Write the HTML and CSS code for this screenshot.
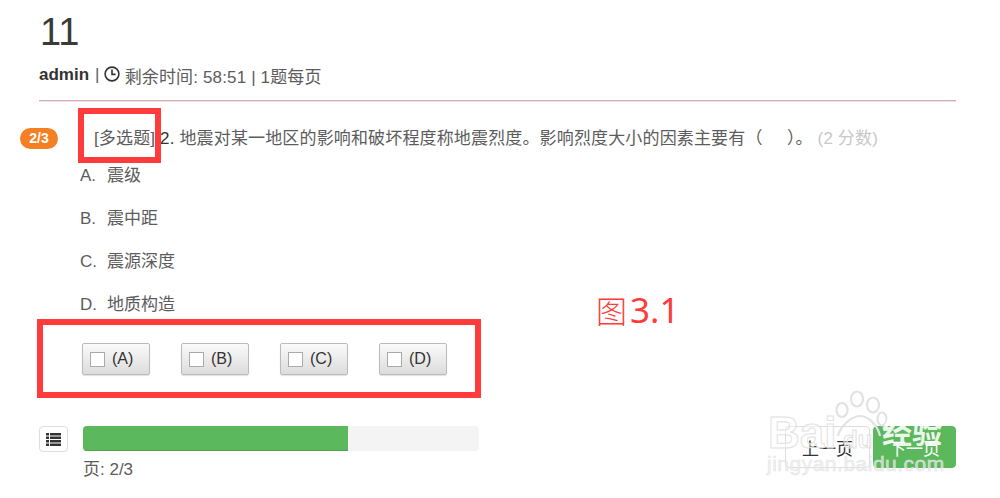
FILE: index.html
```html
<!DOCTYPE html>
<html lang="zh">
<head>
<meta charset="utf-8">
<title>11</title>
<link rel="stylesheet" href="styles.css">
</head>
<body>
<main class="page">
  <h1 class="title">11</h1>
  <div class="meta">
    <b class="user">admin</b> <span class="sep">|</span>
    <svg class="clock" viewBox="0 0 16 16" width="16" height="16"><circle cx="8" cy="8" r="6.9" fill="none" stroke="#333" stroke-width="1.6"/><path d="M8 3.6V8.4H11.6" fill="none" stroke="#333" stroke-width="1.6"/></svg>
    <span>剩余时间: 58:51 | 1题每页</span>
  </div>
  <hr class="rule">
  <section class="question">
    <span class="badge">2/3</span>
    <p class="stem"><span class="type">[多选题]</span> <span class="dark">2.</span> 地震对某一地区的影响和破坏程度称地震烈度。影响烈度大小的因素主要有（ &nbsp; &nbsp; ）。 <span class="score">(2 分数)</span></p>
  </section>
  <ol class="options">
    <li><span class="key">A.</span><span>震级</span></li>
    <li><span class="key">B.</span><span>震中距</span></li>
    <li><span class="key">C.</span><span>震源深度</span></li>
    <li><span class="key">D.</span><span>地质构造</span></li>
  </ol>
  <div class="answers">
    <button class="answer"><i class="box"></i>(A)</button>
    <button class="answer"><i class="box"></i>(B)</button>
    <button class="answer"><i class="box"></i>(C)</button>
    <button class="answer"><i class="box"></i>(D)</button>
  </div>
  <footer class="foot">
    <button class="listbtn" aria-label="list">
      <svg viewBox="0 0 15 13" width="15" height="13"><path d="M0 0h3v2.4H0zM4 0h11v2.4H4zM0 3.5h3v2.4H0zM4 3.5h11v2.4H4zM0 7h3v2.4H0zM4 7h11v2.4H4zM0 10.500h3v2.400H0zM4 10.500h11v2.400H4z" fill="#333"/></svg>
    </button>
    <div class="progress-col">
      <div class="progress"><div class="bar" style="width:67%"></div></div>
      <div class="pages">页: 2/3</div>
    </div>
    <div class="nav">
      <button class="prev">上一页</button>
      <button class="next">下一页</button>
    </div>
  </footer>
</main>

<div class="mark mark-type"></div>
<div class="mark mark-buttons"></div>
<div class="fig"><span class="fig-cjk">图</span>3.1</div>

<div class="wm" aria-hidden="true">
  <svg class="paw" viewBox="0 0 56 50" width="56" height="50">
    <g fill="none" stroke="#e2e2e2" stroke-width="2.200">
      <ellipse cx="10" cy="20" rx="5.500" ry="7"/>
      <ellipse cx="25" cy="9" rx="6" ry="7.500"/>
      <ellipse cx="41" cy="15" rx="6" ry="7.500"/>
      <ellipse cx="50" cy="29" rx="4.500" ry="6.500"/>
      <path d="M6 46C8 36 20 26 28 26C37 26 46 36 48 46"/>
    </g>
  </svg>
  <span class="wm-bai">Bai</span><span class="wm-du">du</span>
  <span class="wm-jy">经验</span>
  <span class="wm-url">jingyan.baidu.com</span>
</div>
</body>
</html>
```

FILE: styles.css
```css
* { box-sizing: border-box; }
html, body { margin: 0; height: 498px; overflow: hidden; background: #fff; }
body { position: relative; font-family: "Liberation Sans", "Noto Sans CJK SC", sans-serif; font-size: 17px; color: #5c5c5c; }
.page { padding: 0 44px 0 39px; }
.title { margin: 0; padding: 11px 0 0 1px; height: 60px; font-size: 38px; line-height: 42px; font-weight: 400; color: #3a3a3a; }
.meta { display: flex; align-items: center; height: 30px; gap: 4px; white-space: nowrap; letter-spacing: .15px; }
.user { color: #333; letter-spacing: 0; }
.sep { margin-left: 2px; }
.clock { flex: none; margin: 0 1px 2px 0; }
.rule { margin: 10px 0 0; border: 0; height: 1px; background: #d4aeae; box-shadow: 0 1px 0 rgba(212,174,174,.35); }
.question { position: relative; height: 38px; margin-top: 18px; padding-left: 55px; }
.badge { position: absolute; left: -19px; top: 9px; width: 38px; height: 21px; border-radius: 11px; background: #f58024; color: #fff; font-size: 14px; font-weight: 700; line-height: 21px; text-align: center; }
.stem { margin: 0; padding-top: 1px; line-height: 38px; white-space: nowrap; letter-spacing: .15px; }
.dark { color: #333; }
.score { color: #c8c8c8; }
.options { list-style: none; margin: 0; padding: 0 0 0 41px; }
.options li { display: flex; height: 43px; line-height: 22px; padding-top: 8px; gap: 12px; }
.key { width: 15px; }
.answers { display: flex; gap: 31px; margin-top: 14px; padding-left: 43px; }
.answer { display: flex; align-items: center; width: 68px; height: 32px; padding: 0 0 0 7px; border: 1px solid #bbb; border-radius: 2px; background: linear-gradient(#fafafa, #dcdcdc); font: 16px "Liberation Sans", sans-serif; color: #333; box-shadow: 0 1px 1px rgba(0,0,0,.12); }
.box { width: 15px; height: 15px; margin-right: 7px; border: 1px solid #aaa; background: #fff; }
.foot { display: flex; align-items: flex-start; margin-top: 51px; }
.listbtn { display: flex; align-items: center; justify-content: center; flex: none; width: 29px; height: 26px; padding: 0; border: 1px solid #ddd; border-radius: 4px; background: #fff; }
.progress-col { width: 396px; margin-left: 15px; }
.progress { height: 25px; border-radius: 4px; background: #f4f4f4; overflow: hidden; }
.bar { height: 100%; background: #5cb85c; border-bottom: 1px solid #4ea44e; }
.pages { margin-top: 9px; line-height: 20px; }
.nav { display: flex; margin-left: auto; gap: 3px; }
.nav button { height: 42px; padding: 0; border-radius: 4px; font: 17px "Liberation Sans", "Noto Sans CJK SC", sans-serif; }
.prev { width: 85px; background: #fff; border: 1px solid #ddd; color: #333; }
.next { width: 83px; background: #5cb85c; border: 1px solid #5cb85c; color: #fff; }
.mark { position: absolute; border: 6px solid #ff3b3b; }
.mark-type { left: 78px; top: 108px; width: 83px; height: 55px; }
.mark-buttons { left: 37px; top: 319px; width: 444px; height: 79px; }
.fig { position: absolute; left: 596px; top: 287px; font-family: "Noto Sans", sans-serif; font-size: 35px; line-height: 46px; color: #ff3b3b; white-space: nowrap; }
.fig-cjk { font-family: "Noto Sans CJK SC", sans-serif; font-weight: 300; font-size: 31px; margin-right: 3px; }
.wm { position: absolute; left: 760px; top: 388px; width: 210px; height: 100px; color: rgba(255,255,255,.45); font-family: "Liberation Sans", sans-serif; }
.paw { position: absolute; left: 72px; top: 2px; }
.wm-bai, .wm-du, .wm-jy, .wm-url { position: absolute; -webkit-text-stroke: 1px #e2e2e2; }
.wm-bai { left: 8px; top: 20px; font-size: 44px; font-weight: 700; line-height: 50px; }
.wm-du { left: 83px; top: 38px; font-size: 24px; font-weight: 700; line-height: 28px; }
.wm-jy { left: 122px; top: 24px; font-family: "Noto Sans CJK SC", sans-serif; font-size: 30px; font-weight: 700; line-height: 36px; color: rgba(255,255,255,.9); -webkit-text-stroke: 0; }
.wm-url { left: 7px; top: 63px; font-size: 21px; line-height: 26px; letter-spacing: .5px; color: rgba(235,235,235,.7); -webkit-text-stroke: .5px #e4e4e4; }
```
